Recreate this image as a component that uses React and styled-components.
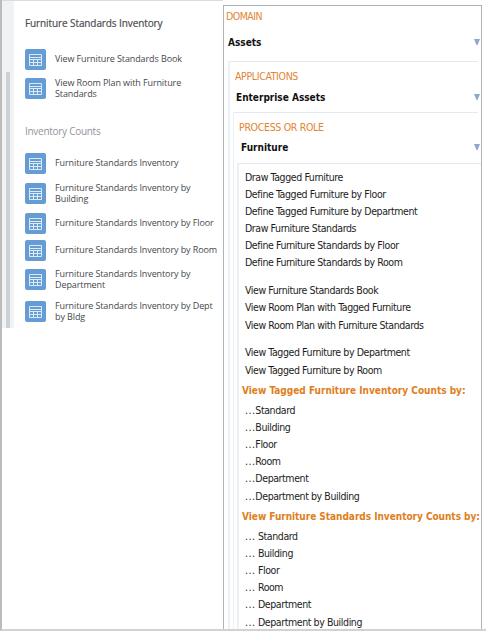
import React from "react";
import styled, { createGlobalStyle } from "styled-components";

const GlobalStyle = createGlobalStyle`
  * { box-sizing: border-box; }
  body { margin: 0; background: #fff; overflow: hidden; }
`;

const Page = styled.main`
  display: flex;
  width: 486px;
  height: 631px;
  border-left: 2px solid #bcbcbc;
  border-bottom: 2px solid #d2d2d2;
  background: #fff;
`;

const TaskColumn = styled.section`
  display: flex;
  width: 221px;
  height: 328px;
  border-top: 1px solid #dcdce0;
  font-family: "Open Sans", sans-serif;
`;

const ScrollTrack = styled.div`
  width: 12px;
  flex: none;
  padding: 71px 4px 0;
  background: #f0f2f3;
`;

const ScrollThumb = styled.div`
  height: 256px;
  background: #cbd1d4;
`;

const TaskList = styled.div`
  flex: 1;
  min-width: 0;
  padding: 14px 0 0 11px;
`;

const TaskHeading = styled.h2`
  margin: ${(p) => (p.$muted ? "20px 0 9px" : "0 0 13px")};
  height: 16px;
  font-size: 10px;
  line-height: 16px;
  font-weight: 400;
  letter-spacing: ${(p) => (p.$muted ? "-0.28px" : "-0.1px")};
  color: ${(p) => (p.$muted ? "#929599" : "#4b4e53")};
  -webkit-text-stroke: ${(p) => (p.$muted ? "0" : "0.2px #4b4e53")};
  white-space: nowrap;
`;

const TaskRow = styled.div`
  display: flex;
  align-items: center;
  height: ${(p) => p.$height}px;
`;

const IconTile = styled.span`
  display: flex;
  align-items: center;
  justify-content: center;
  width: 21px;
  height: 21px;
  flex: none;
  margin-right: 9px;
  border-radius: 2px;
  background: #659cd3;
`;

const TaskLabel = styled.span`
  margin-top: -1px;
  font-size: 9px;
  line-height: 11px;
  letter-spacing: -0.1px;
  color: #45484c;
  white-space: pre;
`;

const DomainPanel = styled.section`
  width: 259px;
  height: 624px;
  margin-top: 5px;
  border: 1px solid #abb4bd;
  border-bottom: 0;
  font-family: "DejaVu Sans Condensed", "DejaVu Sans", sans-serif;
  font-stretch: condensed;
  overflow: hidden;
`;

const Caption = styled.div`
  height: 16px;
  padding-left: ${(p) => p.$indent}px;
  font-size: 10.5px;
  line-height: ${(p) => p.$line ?? 15}px;
  letter-spacing: ${(p) => p.$spacing}px;
  color: #e28532;
`;

const GroupTitle = styled.div`
  display: flex;
  justify-content: space-between;
  align-items: center;
  height: 16px;
  margin: ${(p) => p.$top}px ${(p) => p.$right}px 0 ${(p) => p.$indent}px;
  font-size: 10px;
  font-weight: 700;
  color: #111;
`;

const Nested = styled.div`
  height: ${(p) => p.$height}px;
  margin: ${(p) => p.$margin};
  padding-top: ${(p) => p.$top}px;
  border-top: 1px solid #e1e9f3;
  border-left: ${(p) => p.$edge}px solid #eaf1f8;
`;

const MenuItem = styled.div`
  height: 17.1px;
  padding-left: 6px;
  font-size: 10.5px;
  line-height: 17px;
  letter-spacing: -0.41px;
  color: #1c1c1c;
  white-space: pre;
`;

const Dots = styled.span`
  letter-spacing: 0.45px;
`;

const MenuGroup = styled.div`
  margin-bottom: ${(p) => p.$gap}px;
`;

const CountHeading = styled.div`
  height: 20px;
  padding-left: 3px;
  margin-bottom: ${(p) => p.$gap}px;
  font-size: 10px;
  line-height: 18px;
  font-weight: 700;
  letter-spacing: ${(p) => p.$spacing}px;
  color: #e07e20;
  white-space: nowrap;
`;

const TableIcon = () => (
  <svg width="13" height="13" viewBox="0 0 13 13" fill="none" stroke="#dceaf7">
    <path d="M.5 1.5h12v11H.5zM.5 4.5h12" />
    <path d="M.5 6.5h12M.5 9.5h12M4.5 6.5v6M8.5 6.5v6" />
  </svg>
);

const Arrow = () => (
  <svg width="6" height="6" viewBox="0 0 6 6">
    <path d="M0 0h6L3.5 6h-1z" fill="#8fa5d2" />
  </svg>
);

const Task = ({ label, height }) => (
  <TaskRow $height={height}>
    <IconTile><TableIcon /></IconTile>
    <TaskLabel>{label}</TaskLabel>
  </TaskRow>
);

const standardTasks = [
  ["View Furniture Standards Book", 30],
  ["View Room Plan with Furniture\nStandards", 29],
];

const countTasks = [
  ["Furniture Standards Inventory", 30],
  ["Furniture Standards Inventory by\nBuilding", 30],
  ["Furniture Standards Inventory by Floor", 30],
  ["Furniture Standards Inventory by Room", 24],
  ["Furniture Standards Inventory by\nDepartment", 35],
  ["Furniture Standards Inventory by Dept\nby Bldg", 29],
];

const menuGroups = [
  ["Draw Tagged Furniture", "Define Tagged Furniture by Floor", "Define Tagged Furniture by Department", "Draw Furniture Standards", "Define Furniture Standards by Floor", "Define Furniture Standards by Room"],
  ["View Furniture Standards Book", "View Room Plan with Tagged Furniture", "View Room Plan with Furniture Standards"],
  ["View Tagged Furniture by Department", "View Tagged Furniture by Room"],
];

const dimensions = ["Standard", "Building", "Floor", "Room", "Department", "Department by Building"];

export default function App() {
  return (
    <>
      <GlobalStyle />
      <Page>
        <TaskColumn>
          <ScrollTrack><ScrollThumb /></ScrollTrack>
          <TaskList>
            <TaskHeading>Furniture Standards Inventory</TaskHeading>
            {standardTasks.map(([label, h]) => <Task key={label} label={label} height={h} />)}
            <TaskHeading $muted>Inventory Counts</TaskHeading>
            {countTasks.map(([label, h]) => <Task key={label} label={label} height={h} />)}
          </TaskList>
        </TaskColumn>
        <DomainPanel>
          <Caption $indent={2} $spacing={-0.5} $line={20}>DOMAIN</Caption>
          <GroupTitle $top={12} $indent={4} $right={1}>Assets<Arrow /></GroupTitle>
          <Nested $height={568} $edge={2} $top={7} $margin="11px 3px 0 4px">
            <Caption $indent={5} $spacing={-0.35}>APPLICATIONS</Caption>
            <GroupTitle $top={4} $indent={6} $right={-2}>Enterprise Assets<Arrow /></GroupTitle>
            <Nested $height={520} $edge={1} $top={7} $margin="7px 0 0 3px">
              <Caption $indent={5} $spacing={-0.32}>PROCESS OR ROLE</Caption>
              <GroupTitle $top={3} $indent={7} $right={-2}>Furniture<Arrow /></GroupTitle>
              <Nested $height={466} $edge={2} $top={5} $margin="8px -3px 0 3px">
                {menuGroups.map((items, i) => (
                  <MenuGroup key={items[0]} $gap={i === 2 ? 3.4 : 10.8}>
                    {items.map((label) => <MenuItem key={label}>{label}</MenuItem>)}
                  </MenuGroup>
                ))}
                <CountHeading $spacing={0} $gap={0.1}>View Tagged Furniture Inventory Counts by:</CountHeading>
                <MenuGroup $gap={3.2}>
                  {dimensions.map((d) => <MenuItem key={d}><Dots>...</Dots>{d}</MenuItem>)}
                </MenuGroup>
                <CountHeading $spacing={-0.03} $gap={0.2}>View Furniture Standards Inventory Counts by:</CountHeading>
                <MenuGroup $gap={0}>
                  {dimensions.map((d) => <MenuItem key={d}><Dots>...</Dots> {d}</MenuItem>)}
                </MenuGroup>
              </Nested>
            </Nested>
          </Nested>
        </DomainPanel>
      </Page>
    </>
  );
}
